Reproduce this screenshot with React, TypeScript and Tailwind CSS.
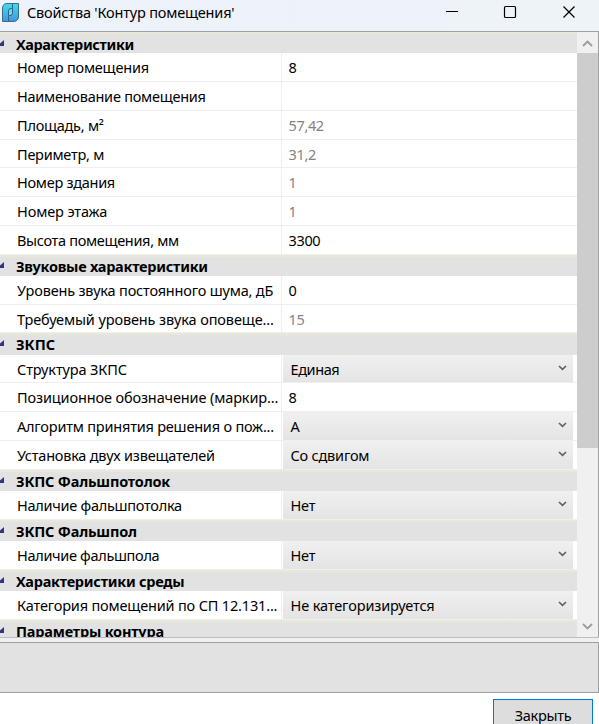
import React from 'react';

type Item = {
  kind: 'head' | 'text' | 'muted' | 'select';
  label: string;
  h: string;
  t: string;
  value?: string;
  vt?: string;
};

const items: Item[] = [
  { kind: 'head', label: 'Характеристики', h: 'h-[21px] pt-px', t: 'tracking-[-0.36px]' },
  { kind: 'text', label: 'Номер помещения', h: 'h-[29px]', t: 'tracking-[-0.2px]', value: '8' },
  { kind: 'text', label: 'Наименование помещения', h: 'h-[29px]', t: 'tracking-[-0.25px]', value: '' },
  { kind: 'muted', label: 'Площадь, м²', h: 'h-[29px]', t: 'tracking-[-0.25px]', value: '57,42' },
  { kind: 'muted', label: 'Периметр, м', h: 'h-[28px]', t: 'tracking-[-0.25px]', value: '31,2' },
  { kind: 'muted', label: 'Номер здания', h: 'h-[29px]', t: 'tracking-[-0.28px]', value: '1' },
  { kind: 'muted', label: 'Номер этажа', h: 'h-[29px]', t: 'tracking-[-0.12px]', value: '1' },
  { kind: 'text', label: 'Высота помещения, мм', h: 'h-[29px]', t: 'tracking-[-0.32px]', value: '3300' },
  { kind: 'head', label: 'Звуковые характеристики', h: 'h-[21px]', t: 'tracking-[-0.26px]' },
  { kind: 'text', label: 'Уровень звука постоянного шума, дБ', h: 'h-[29px]', t: 'tracking-[-0.19px]', value: '0' },
  { kind: 'muted', label: 'Требуемый уровень звука оповеще...', h: 'h-[28px]', t: 'tracking-[-0.11px]', value: '15' },
  { kind: 'head', label: 'ЗКПС', h: 'h-[22px]', t: 'tracking-normal' },
  { kind: 'select', label: 'Структура ЗКПС', h: 'h-[28px]', t: 'tracking-[-0.12px]', value: 'Единая', vt: 'tracking-[-0.4px]' },
  { kind: 'text', label: 'Позиционное обозначение (маркир...', h: 'h-[29px]', t: 'tracking-[-0.13px]', value: '8' },
  { kind: 'select', label: 'Алгоритм принятия решения о пож...', h: 'h-[29px]', t: 'tracking-[-0.2px]', value: 'А' },
  { kind: 'select', label: 'Установка двух извещателей', h: 'h-[29px]', t: 'tracking-[-0.22px]', value: 'Со сдвигом' },
  { kind: 'head', label: 'ЗКПС Фальшпотолок', h: 'h-[21px]', t: 'tracking-[-0.2px]' },
  { kind: 'select', label: 'Наличие фальшпотолка', h: 'h-[29px]', t: 'tracking-[-0.27px]', value: 'Нет' },
  { kind: 'head', label: 'ЗКПС Фальшпол', h: 'h-[21px]', t: 'tracking-[-0.2px]' },
  { kind: 'select', label: 'Наличие фальшпола', h: 'h-[29px]', t: 'tracking-[-0.32px]', value: 'Нет' },
  { kind: 'head', label: 'Характеристики среды', h: 'h-[21px]', t: 'tracking-[-0.25px]' },
  { kind: 'select', label: 'Категория помещений по СП 12.131...', h: 'h-[29px]', t: 'tracking-[-0.17px]', value: 'Не категоризируется', vt: 'tracking-[-0.12px]' },
  { kind: 'head', label: 'Параметры контура', h: 'h-[21px]', t: 'tracking-[-0.2px]' },
];

function Row({ item }: { item: Item }) {
  if (item.kind === 'head') {
    return (
      <div className={`flex shrink-0 border-t-2 border-[#e9e7da] bg-[#e2e2e2] ${item.h}`}>
        <svg className="mt-[5px] h-[6px] w-4 shrink-0" viewBox="0 0 16 6">
          <path d="M4 0V6H0V3.5Z" fill="#35357f" />
        </svg>
        <span className={`whitespace-nowrap leading-[19px] font-bold ${item.t}`}>{item.label}</span>
      </div>
    );
  }
  return (
    <div className={`flex shrink-0 border-b border-[#efefef] ${item.h}`}>
      <div className="w-[282px] shrink-0 border-r border-[#efefef] pl-[17px]">
        <span className={`block whitespace-nowrap leading-[29px] ${item.t}`}>{item.label}</span>
      </div>
      {item.kind === 'select' ? (
        <div className="ml-px flex w-[290px] justify-between bg-linear-to-b from-[#f0f0f0] to-[#e4e4e4] pl-[7.5px]">
          <span className={`whitespace-nowrap leading-[29px] ${item.vt ?? 'tracking-[-0.2px]'}`}>{item.value}</span>
          <svg className="mt-[10px] mr-[6px] h-[6px] w-[9px]" viewBox="0 0 9 6" fill="none">
            <path d="M1 1L4.5 4.3L8 1" stroke="#606060" strokeWidth="1.6" />
          </svg>
        </div>
      ) : (
        <span className={`pl-[6.5px] leading-[29px] tracking-[-0.35px] ${item.kind === 'muted' ? 'text-[#838383]' : ''}`}>
          {item.value}
        </span>
      )}
    </div>
  );
}

export default function App() {
  return (
    <div className="flex h-[724px] w-[599px] flex-col overflow-hidden bg-white font-['Noto_Sans','Open_Sans',sans-serif] text-[14.5px] text-black">
      <header className="flex h-[32px] shrink-0 border-b border-[#9da1a5] bg-linear-to-r from-[#eef2fb] to-[#edf3f7]">
        <svg className="mt-[3px] ml-[2px] h-[19px] w-[17px] shrink-0" viewBox="0 0 17 19">
          <defs>
            <linearGradient id="logo" x1="0" y1="0" x2="0" y2="1">
              <stop offset="0" stopColor="#43dcea" />
              <stop offset="1" stopColor="#4196dc" />
            </linearGradient>
          </defs>
          <path d="M5 .5H16.5V14Q16 18.5 11 18.5H.5V5Q1 .5 5 .5Z" fill="url(#logo)" stroke="#376d8e" />
          <path d="M10.5 5.5V10.5Q10.5 12.5 8 12.5H6.5V8Q6.5 5.5 9 5.5Z" fill="#7fd0ea" stroke="#2b6688" />
          <path d="M10.5 .5V5.5M6.5 12.5V18" fill="none" stroke="#2b6688" />
        </svg>
        <span className="ml-[8px] leading-[24px] whitespace-nowrap tracking-[-0.18px]">Свойства &apos;Контур помещения&apos;</span>
        <svg className="ml-auto h-[31px] w-[160px]" viewBox="0 0 160 31" fill="none" stroke="#000">
          <path d="M7 11.5H19" />
          <rect x="65.5" y="6.5" width="11" height="11" rx="1" strokeWidth="1.2" />
          <path d="M124.5 6.5L135.5 17.5M135.5 6.5L124.5 17.5" strokeWidth="1.2" />
        </svg>
      </header>

      <main className="flex h-[605px] shrink-0 border-r border-[#a0a0a0]">
        <div className="flex w-[577px] shrink-0 flex-col overflow-hidden">
          {items.map((item) => (
            <Row key={item.label} item={item} />
          ))}
        </div>
        <div className="flex flex-1 flex-col bg-[#f0f0f0]">
          <svg className="h-[21px] w-[20px]" viewBox="0 0 20 21" fill="none">
            <path d="M6 14L10.5 9.5L15 14" stroke="#9c9c9c" strokeWidth="1.8" />
          </svg>
          <div className="h-[395px] bg-[#cdcdcd]" />
          <svg className="mt-auto h-[20px] w-[20px]" viewBox="0 0 20 20" fill="none">
            <path d="M6 7L10.5 11.5L15 7" stroke="#9c9c9c" strokeWidth="1.8" />
          </svg>
        </div>
      </main>

      <div className="h-[5px] shrink-0 border-t border-[#bdbdbd] bg-[#f0f0f0]" />
      <div className="h-[51px] shrink-0 border-y border-r border-[#a0a0a0] bg-[#e2e2e2]" />
      <footer className="flex h-[31px] shrink-0 justify-end overflow-hidden pt-[6px] pr-[6px]">
        <button className="h-[32px] w-[100px] shrink-0 border border-[#0078d7] bg-[#dddddd] leading-[29px] tracking-[-0.3px]">
          Закрыть
        </button>
      </footer>
    </div>
  );
}
